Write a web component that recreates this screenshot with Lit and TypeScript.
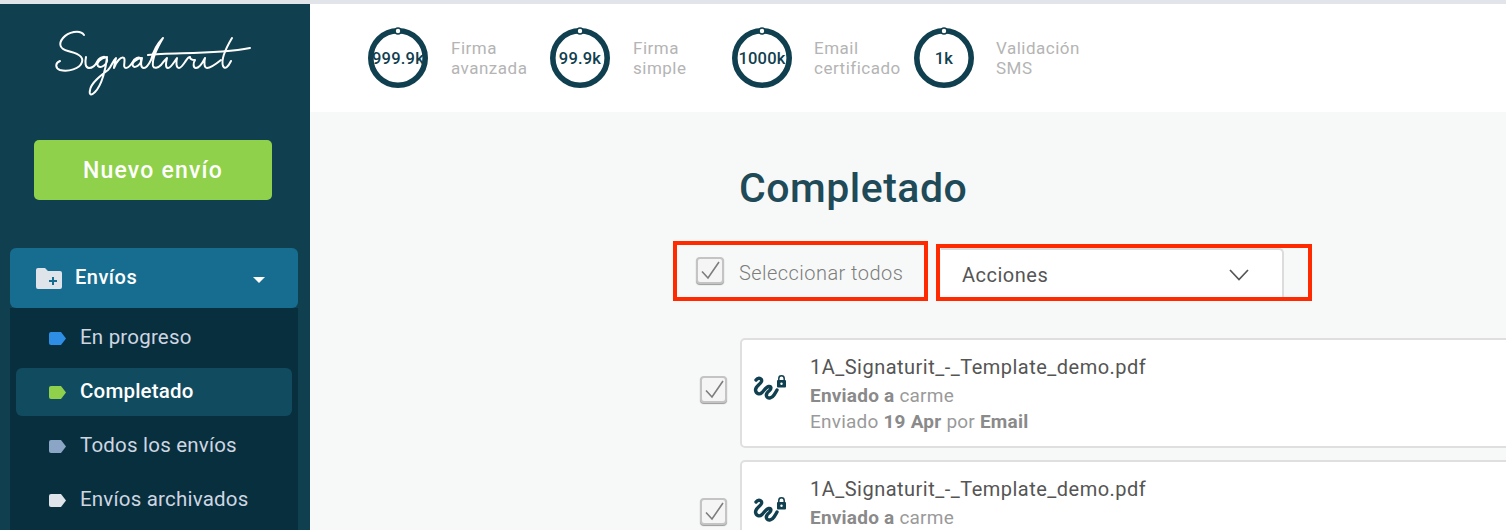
import { LitElement, html, css, svg } from "lit";
import { customElement } from "lit/decorators.js";

const stats = [
  { v: "999.9k", l: ["Firma", "avanzada"] },
  { v: "99.9k", l: ["Firma", "simple"] },
  { v: "1000k", l: ["Email", "certificado"] },
  { v: "1k", l: ["Validación", "SMS"] },
];
const items = [
  { t: "En progreso", c: "blue", a: false },
  { t: "Completado", c: "green", a: true },
  { t: "Todos los envíos", c: "slate", a: false },
  { t: "Envíos archivados", c: "pale", a: false },
];

const check = html`<span class="cb"><svg viewBox="0 0 28 28" width="28" height="28"><path d="M6 14.5l6 6.5L23 5" fill="none" stroke="#7d7d7d" stroke-width="1.6"/></svg></span>`;

const ring = svg`<circle cx="30" cy="33" r="27.2" fill="none" stroke="#10404f" stroke-width="5.6"/><circle cx="30" cy="6" r="3" fill="#fff" stroke="#10404f" stroke-width="1.6"/>`;

@customElement("app-root")
export class AppRoot extends LitElement {
  static styles = css`
    :host { display: block; width: 1506px; height: 530px; overflow: hidden; font-family: Roboto, "Liberation Sans", sans-serif; background: #f7f9f8; }
    * { box-sizing: border-box; }
    .page { display: flex; flex-direction: column; height: 530px; }
    .strip { height: 4px; background: #e1e4e9; flex: none; }
    .body { display: flex; flex: 1; min-height: 0; }
    .side { width: 310px; flex: none; background: #10404f; padding: 0 12px 0 10px; overflow: hidden; }
    .logo { display: block; margin: 0; height: 136px; width: 288px; }
    .new { margin-left: 24px; width: 238px; height: 60px; border-radius: 5px; background: #8fd14a; color: #fff; font-size: 23px; font-weight: 500; letter-spacing: 1.2px; display: flex; align-items: center; justify-content: center; }
    .group { margin-top: 48px; height: 60px; border-radius: 6px; background: #166d8f; color: #fff; display: flex; align-items: center; padding-left: 26px; font-size: 20px; font-weight: 500; letter-spacing: 0.5px; }
    .group .lab { margin-left: 13px; flex: 1; margin-top: -2px; }
    .caret { margin-right: 33px; width: 0; height: 0; border-left: 6.5px solid transparent; border-right: 6.5px solid transparent; border-top: 6.5px solid #fff; margin-top: 4px; }
    .sub { background: #082f3d; border-radius: 0 0 6px 6px; padding: 6px 6px 20px; }
    .it { height: 48px; margin-bottom: 6px; border-radius: 6px; display: flex; align-items: center; padding-left: 33px; color: #ced6e2; font-size: 20.5px; letter-spacing: 0.2px; gap: 14px; }
    .it span { margin-top: -2px; }
    .it.on { background: #114b60; color: #fff; font-weight: 500; }
    .tag.blue { color: #2e8de4; } .tag.green { color: #8fd14a; } .tag.slate { color: #8ba5c6; } .tag.pale { color: #dfe3ea; }
    .main { flex: 1; min-width: 0; display: flex; flex-direction: column; }
    .stats { height: 108px; background: #fff; display: flex; align-items: center; padding-left: 58px; flex: none; }
    .stat { width: 182px; display: flex; align-items: center; gap: 23px; flex: none; }
    .stat:nth-child(n + 3) { gap: 22px; }
    .circle { width: 60px; height: 66px; position: relative; display: flex; align-items: center; justify-content: center; flex: none; }
    .circle svg { position: absolute; left: 0; top: 0; }
    .val { font-size: 16.5px; font-weight: 500; color: #10404f; white-space: nowrap; letter-spacing: 0.2px; }
    .lbl { font-size: 17px; line-height: 20px; color: #b4b4b4; letter-spacing: 0.5px; font-weight: 400; }
    .content { flex: 1; min-height: 0; padding: 54px 0 0 363px; }
    h1 { margin: 0 0 0 66px; font-size: 41px; line-height: 44px; font-weight: 500; color: #1f4a58; letter-spacing: 0.5px; }
    .tools { display: flex; align-items: flex-end; gap: 8px; margin-top: 31px; }
    .mark { border: 4px solid #ff2a00; }
    .selall { width: 255px; height: 60px; display: flex; align-items: center; padding-left: 19px; gap: 15px; color: #7d7d7d; font-size: 20px; font-weight: 300; letter-spacing: 0.45px; }
    .selall span.t { margin-top: 4px; }
    .selall .cb { margin-top: -2px; }
    .actwrap { width: 376px; height: 57px; padding-left: 1px; }
    .act { width: 343px; height: 49px; background: #fff; border: 2px solid #dcdcdc; border-width: 2px 2px 0 0; border-radius: 0 5px 0 0; display: flex; align-items: center; justify-content: space-between; padding: 2px 33px 0 21px; color: #555; font-size: 20px; letter-spacing: 0.5px; }
    .cb { width: 28px; height: 27px; flex: none; display: block; border: 2px solid #c4c4c4; border-radius: 4px; background: #f5f5f5; box-shadow: 0 1px 1px #999; overflow: hidden; }
    .cb svg { display: block; margin: -2px; }
    .list { margin: 37px 0 0 27px; display: flex; flex-direction: column; gap: 12px; }
    .row { display: flex; align-items: center; gap: 13px; }
    .row .cb { margin-top: -8px; width: 27px; }
    .card { width: 900px; height: 110px; flex: none; background: #fff; border: 2px solid #dfdfdf; border-radius: 5px; display: flex; align-items: flex-start; padding: 0 0 0 11px; }
    .txt { padding-left: 21px; padding-top: 14px; font-size: 19px; line-height: 26px; color: #9a9a9a; letter-spacing: 0.22px; }
    .name { font-size: 20px; color: #555; line-height: 26px; margin-bottom: 3px; letter-spacing: 0.48px; }
    b { font-weight: 700; color: #8a8a8a; }
    .ico { margin-top: 35px; flex: none; display: block; }
  `;

  private logo() {
    return html`<svg class="logo" viewBox="10 4 288 136" role="img" aria-label="Signaturit logo">
      <g fill="none" stroke="#fff" stroke-width="2" stroke-linecap="round" stroke-linejoin="round">
        <path d="M84 35C80 29 68 32 63 38C58 44 60 49 68 51C76 53 84 56 82 62C80 69 68 72 60 70C55 68 55 63 60 61"/>
        <path d="M86 57C85 62 85 68 89 68C92 68 95 66 97 62C99 57 106 55 107 59C108 64 101 69 98 66C96 63 100 58 107 57C106 68 102 85 95 92C91 96 89 95 90 90C91 83 100 76 108 70C112 66 113 60 116 58C115 62 114 66 114 68C116 62 121 56 124 58C126 60 122 68 126 68C128 68 130 66 132 63C134 58 140 56 141 59C142 64 135 69 133 66C131 63 137 58 142 58C141 62 140 68 144 68C147 68 149 64 151 60C153 52 157 44 163 38C157 48 152 60 153 66C154 69 158 68 161 65C163 62 165 60 167 58C166 62 165 68 168 68C171 68 174 62 177 58C176 62 176 68 179 68C181 68 183 65 185 62C187 59 188 57 190 57C190 60 193 60 195 60C193 63 193 68 196 68C199 68 202 64 205 58C204 62 204 68 207 68C211 68 216 64 221 60"/>
        <path d="M232 38C226 48 221 60 223 66C225 70 228 67 231 61"/>
        <path d="M148 55C170 52 215 55 250 48"/>
      </g>
    </svg>`;
  }

  private tag(c: string) {
    return html`<svg class="tag ${c}" width="17" height="13" viewBox="0 0 17 13"><path d="M2 0h10l5 6.5-5 6.5H2a2 2 0 0 1-2-2V2a2 2 0 0 1 2-2z" fill="currentColor"/></svg>`;
  }

  private docIcon() {
    return html`<svg class="ico" width="36" height="30" viewBox="0 0 36 30"><path d="M3 5C5 2 9.500 3 8.500 6.500C7.500 9.500 2.500 11 2.500 15C3 19 6.500 20 9 17.500C11 15.500 13 12 15.500 11.500C18.500 11 18.500 13.500 16.500 15.500C14 17.500 12.500 20 14 22C15.500 24 19 23 21 20C22 18.500 23 17 24 15" fill="none" stroke="#10404f" stroke-width="3.4" stroke-linecap="round"/><path d="M25.800 5.500V3.500a2.700 2.700 0 0 1 5.400 0V5.500" fill="none" stroke="#10404f" stroke-width="1.500"/><rect x="24" y="5" width="9" height="7.500" rx="1" fill="#10404f"/><circle cx="28.500" cy="8.700" r="1.200" fill="#fff"/></svg>`;
  }

  private row() {
    return html`<div class="row">${check}<div class="card">${this.docIcon()}<div class="txt">
      <div class="name">1A_Signaturit_-_Template_demo.pdf</div>
      <div><b>Enviado a</b> carme</div>
      <div>Enviado <b>19 Apr</b> por <b>Email</b></div>
    </div></div></div>`;
  }

  render() {
    return html`<div class="page"><div class="strip"></div><div class="body">
      <aside class="side">
        ${this.logo()}
        <div class="new">Nuevo envío</div>
        <div class="group">
          <svg width="26" height="21" viewBox="0 0 26 21"><path d="M2 0h7l3 3h12a2 2 0 0 1 2 2v14a2 2 0 0 1-2 2H2a2 2 0 0 1-2-2V2a2 2 0 0 1 2-2z" fill="#dfe3ea"/><path d="M17 9v8M13 13h8" stroke="#166d8f" stroke-width="2"/></svg>
          <span class="lab">Envíos</span><span class="caret"></span>
        </div>
        <div class="sub">
          ${items.map((i) => html`<div class="it ${i.a ? "on" : ""}">${this.tag(i.c)}<span>${i.t}</span></div>`)}
        </div>
      </aside>
      <div class="main">
        <div class="stats">
          ${stats.map((s) => html`<div class="stat">
            <div class="circle"><svg width="60" height="66" viewBox="0 0 60 66">${ring}</svg><span class="val">${s.v}</span></div>
            <div class="lbl">${s.l[0]}<br />${s.l[1]}</div>
          </div>`)}
        </div>
        <div class="content">
          <h1>Completado</h1>
          <div class="tools">
            <div class="mark selall">${check}<span class="t">Seleccionar todos</span></div>
            <div class="mark actwrap"><div class="act"><span>Acciones</span>
              <svg width="20" height="12" viewBox="0 0 20 12"><path d="M1 1l9 9.500L19 1" fill="none" stroke="#555" stroke-width="1.700"/></svg>
            </div></div>
          </div>
          <div class="list">${this.row()}${this.row()}</div>
        </div>
      </div>
    </div></div>`;
  }
}
